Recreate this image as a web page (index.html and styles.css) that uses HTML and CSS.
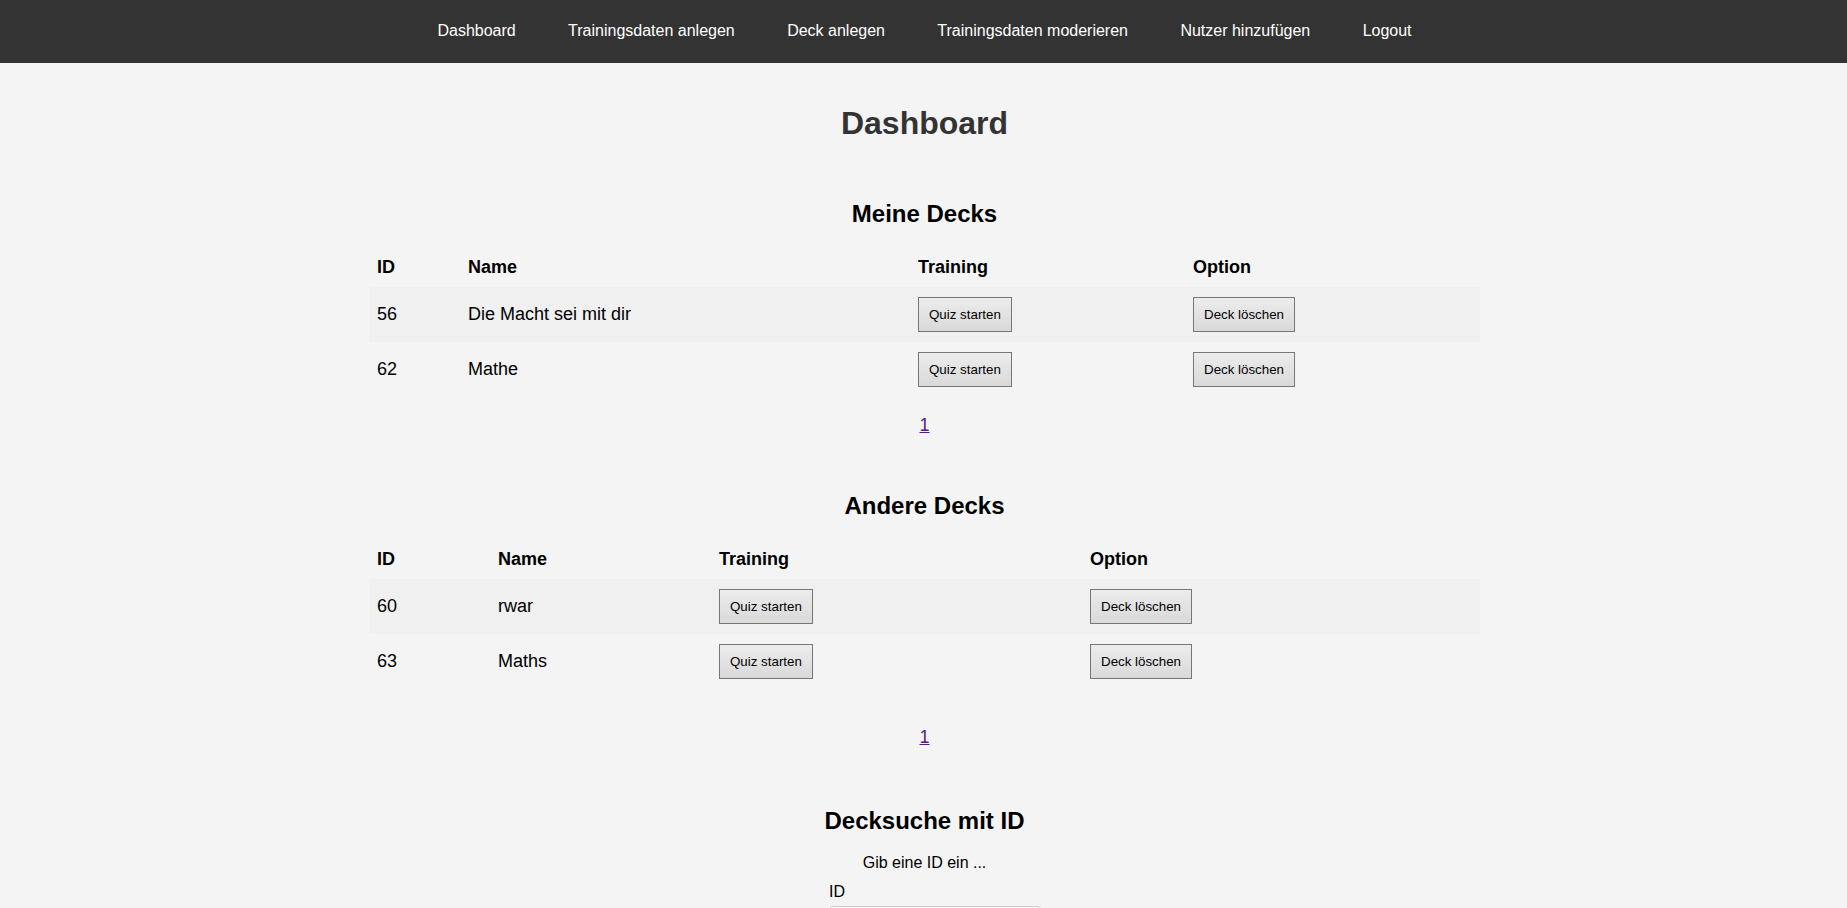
FILE: index.html
```html
<!DOCTYPE html>
<html lang="de">
<head>
<meta charset="utf-8">
<title>Dashboard</title>
<link rel="stylesheet" href="styles.css">
</head>
<body>
<nav class="topnav">
  <ul class="topnav-list">
    <li><a class="topnav-link" href="#">Dashboard</a></li>
    <li><a class="topnav-link" href="#">Trainingsdaten anlegen</a></li>
    <li><a class="topnav-link" href="#">Deck anlegen</a></li>
    <li><a class="topnav-link" href="#">Trainingsdaten moderieren</a></li>
    <li><a class="topnav-link" href="#">Nutzer hinzufügen</a></li>
    <li><a class="topnav-link" href="#">Logout</a></li>
  </ul>
</nav>
<main class="main">
  <h1 class="page-title">Dashboard</h1>

  <section class="deck-section deck-section--mine">
    <h2 class="section-title">Meine Decks</h2>
    <table class="deck-table">
      <colgroup>
        <col class="c-mine-id"><col class="c-mine-name"><col class="c-mine-train"><col class="c-mine-opt">
      </colgroup>
      <thead>
        <tr><th>ID</th><th>Name</th><th>Training</th><th>Option</th></tr>
      </thead>
      <tbody>
        <tr class="row-alt"><td>56</td><td>Die Macht sei mit dir</td><td><button class="btn">Quiz starten</button></td><td><button class="btn">Deck löschen</button></td></tr>
        <tr><td>62</td><td>Mathe</td><td><button class="btn">Quiz starten</button></td><td><button class="btn">Deck löschen</button></td></tr>
      </tbody>
    </table>
    <div class="pagination"><a class="page-link" href="#">1</a></div>
  </section>

  <section class="deck-section deck-section--other">
    <h2 class="section-title">Andere Decks</h2>
    <table class="deck-table">
      <colgroup>
        <col class="c-other-id"><col class="c-other-name"><col class="c-other-train"><col class="c-other-opt">
      </colgroup>
      <thead>
        <tr><th>ID</th><th>Name</th><th>Training</th><th>Option</th></tr>
      </thead>
      <tbody>
        <tr class="row-alt"><td>60</td><td>rwar</td><td><button class="btn">Quiz starten</button></td><td><button class="btn">Deck löschen</button></td></tr>
        <tr><td>63</td><td>Maths</td><td><button class="btn">Quiz starten</button></td><td><button class="btn">Deck löschen</button></td></tr>
      </tbody>
    </table>
    <div class="pagination pagination--spaced"><a class="page-link" href="#">1</a></div>
  </section>

  <section class="deck-section deck-section--search">
    <h2 class="section-title">Decksuche mit ID</h2>
    <p class="search-hint">Gib eine ID ein ...</p>
    <form class="search-form">
      <label class="search-label" for="deckid">ID</label>
      <input class="search-input" id="deckid" type="text">
    </form>
  </section>
</main>
</body>
</html>
```

FILE: styles.css
```css
html, body {
  margin: 0;
  padding: 0;
}
body {
  background: #f4f4f4;
  font-family: "Liberation Sans", Arial, sans-serif;
  color: #000;
  font-size: 16px;
  padding-left: 2px;
}

.topnav {
  background: #333333;
  height: 63px;
  box-sizing: border-box;
  padding-bottom: 2px;
  display: flex;
  align-items: center;
  justify-content: center;
  margin-left: -2px;
  padding-left: 2px;
}
.topnav-list {
  list-style: none;
  margin: 0;
  padding: 0;
  display: flex;
  gap: 52.4px;
}
.topnav-link {
  color: #ffffff;
  text-decoration: none;
  font-size: 16px;
}

.main {
  padding-top: 20px;
}
.page-title {
  margin: 21.5px 0 0;
  text-align: center;
  font-size: 32px;
  color: #333333;
  font-weight: bold;
}

.deck-section {
  display: flex;
  flex-direction: column;
  align-items: center;
}
.deck-section--mine { margin-top: 58.3px; }
.deck-section--other { margin-top: 56.5px; }
.deck-section--search { margin-top: 59.5px; }

.section-title {
  margin: 0 0 18.8px;
  font-size: 24px;
  font-weight: bold;
  color: #000;
}

.deck-table {
  width: 1111px;
  border-collapse: collapse;
  table-layout: fixed;
  font-size: 18px;
}
.c-mine-id { width: 91px; }
.c-mine-name { width: 450px; }
.c-mine-train { width: 275px; }
.c-mine-opt { width: 295px; }
.c-other-id { width: 121px; }
.c-other-name { width: 221px; }
.c-other-train { width: 371px; }
.c-other-opt { width: 398px; }

.deck-table th,
.deck-table td {
  padding: 10px 8px;
  text-align: left;
  vertical-align: middle;
}
.deck-table th {
  font-weight: bold;
  padding-bottom: 9px;
}
.row-alt {
  background: #f0f0f0;
}

.btn {
  display: block;
  height: 35px;
  box-sizing: border-box;
  padding: 0 10px;
  font-family: "Liberation Sans", Arial, sans-serif;
  font-size: 13.33px;
  color: #000;
  background: linear-gradient(#ececec, #d9d9d9);
  border: 1px solid #767676;
  border-radius: 0;
}

.pagination {
  margin-top: 18.3px;
  font-size: 18px;
  text-align: center;
}
.pagination--spaced {
  margin-top: 37.7px;
}
.page-link {
  color: #551a8b;
  text-decoration: underline;
}

.search-hint {
  margin: 0;
  font-size: 16px;
  text-align: center;
}
.search-form {
  width: 233px;
  box-sizing: border-box;
  padding-left: 21px;
  margin-top: 10.6px;
  display: flex;
  flex-direction: column;
  align-items: flex-start;
}
.search-label {
  font-size: 16px;
}
.search-input {
  margin-top: 5.3px;
  width: 212px;
  height: 36px;
  box-sizing: border-box;
  border: 1px solid #cccccc;
  border-radius: 4px;
  background: #ffffff;
  padding: 8px;
  font-size: 16px;
}
```
